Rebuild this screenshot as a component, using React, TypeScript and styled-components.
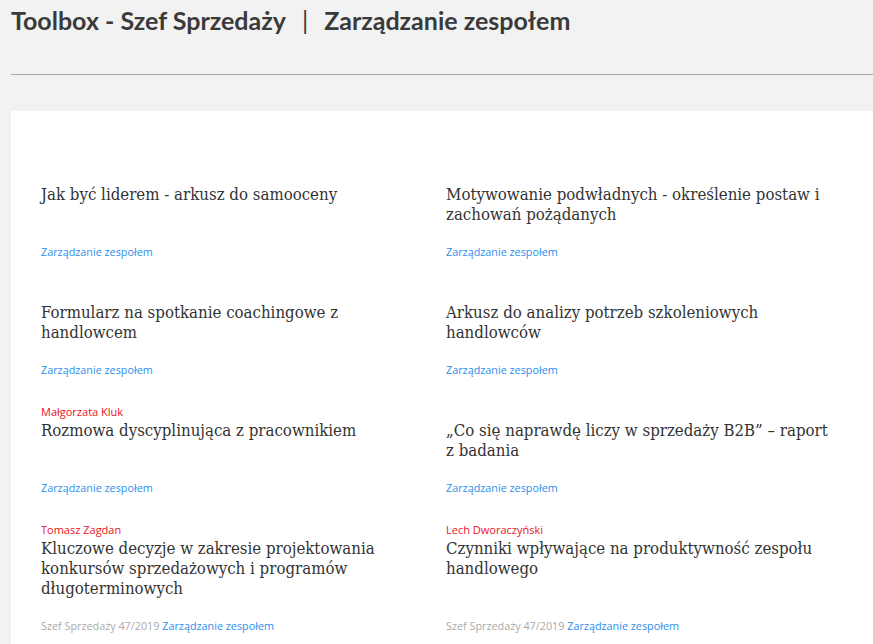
import React from 'react';
import styled, { createGlobalStyle } from 'styled-components';

const GlobalStyle = createGlobalStyle`
  html, body {
    margin: 0;
    padding: 0;
    background: #f2f2f2;
  }
  body {
    font-family: 'Open Sans', 'Noto Sans', sans-serif;
  }
`;

const Page = styled.div`
  padding: 0 0 0 11px;
  min-height: 644px;
  overflow: hidden;
`;

const Header = styled.header`
  height: 75px;
  border-bottom: 1px solid #aaaaaa;
  box-sizing: border-box;
  padding-top: 3px;
`;

const PageTitle = styled.h1`
  margin: 0;
  font-family: 'Lato', 'Open Sans', sans-serif;
  font-size: 25px;
  font-weight: 700;
  color: #3a3a3a;
  line-height: 34px;
`;

const Sep = styled.span`
  display: inline-block;
  margin: 0 16px;
  font-weight: 400;
`;

const Panel = styled.main`
  margin-top: 36px;
  background: #fff;
  padding: 57px 30px 20px 30px;
  display: grid;
  grid-template-columns: 405px 1fr;
  row-gap: 26px;
`;

const Item = styled.article`
  display: flex;
  flex-direction: column;
  padding-right: 10px;
`;

const Author = styled.div`
  font-size: 11px;
  line-height: 16px;
  height: 16px;
  color: #e8141a;
`;

const Title = styled.h2`
  margin: 0 0 20px;
  font-family: 'DejaVu Serif Condensed', 'DejaVu Serif', serif;
  font-stretch: condensed;
  font-size: 16.7px;
  font-weight: 400;
  line-height: 20px;
  min-height: 40px;
  color: #333;
`;

const Meta = styled.div`
  margin-top: auto;
  font-size: 10.8px;
  line-height: 16px;
  color: #aaaaaa;
`;

const Category = styled.a`
  color: #2b8ff0;
  text-decoration: none;
`;

type Entry = {
  author?: string;
  title: string;
  issue?: string;
};

const entries: Entry[] = [
  { title: 'Jak być liderem - arkusz do samooceny' },
  { title: 'Motywowanie podwładnych - określenie postaw i zachowań pożądanych' },
  { title: 'Formularz na spotkanie coachingowe z handlowcem' },
  { title: 'Arkusz do analizy potrzeb szkoleniowych handlowców' },
  { author: 'Małgorzata Kluk', title: 'Rozmowa dyscyplinująca z pracownikiem' },
  { title: '„Co się naprawdę liczy w sprzedaży B2B” – raport z badania' },
  {
    author: 'Tomasz Zagdan',
    title: 'Kluczowe decyzje w zakresie projektowania konkursów sprzedażowych i programów długoterminowych',
    issue: 'Szef Sprzedaży 47/2019',
  },
  {
    author: 'Lech Dworaczyński',
    title: 'Czynniki wpływające na produktywność zespołu handlowego',
    issue: 'Szef Sprzedaży 47/2019',
  },
];

export default function App() {
  return (
    <>
      <GlobalStyle />
      <Page>
        <Header>
          <PageTitle>
            Toolbox - Szef Sprzedaży<Sep>|</Sep>Zarządzanie zespołem
          </PageTitle>
        </Header>
        <Panel>
          {entries.map((e, i) => (
            <Item key={i}>
              <Author>{e.author ?? ''}</Author>
              <Title>{e.title}</Title>
              <Meta>
                {e.issue && <>{e.issue} </>}
                <Category href="#">Zarządzanie zespołem</Category>
              </Meta>
            </Item>
          ))}
        </Panel>
      </Page>
    </>
  );
}
